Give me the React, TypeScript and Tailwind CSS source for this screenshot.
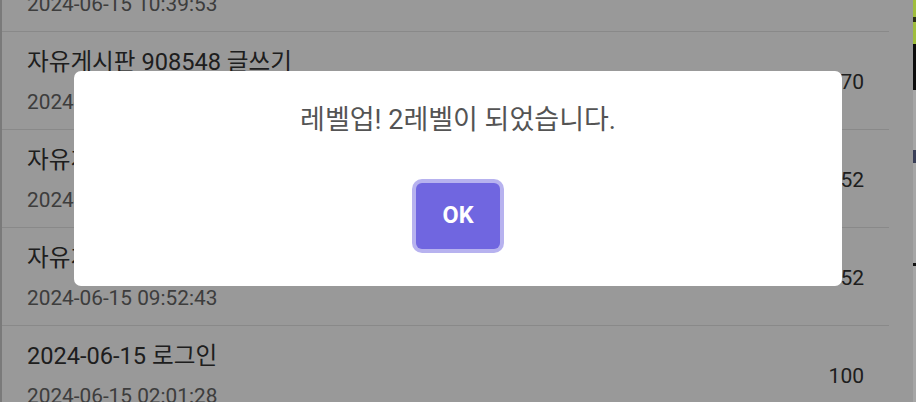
import React from "react";

type Activity = { title: string; date: string; point: string };

const activities: Activity[] = [
  { title: "자유게시판 908551 글쓰기", date: "2024-06-15 10:39:53", point: "70" },
  { title: "자유게시판 908548 글쓰기", date: "2024-06-15 10:21:07", point: "70" },
  { title: "자유게시판 908540 글쓰기", date: "2024-06-15 10:02:19", point: "52" },
  { title: "자유게시판 908533 글쓰기", date: "2024-06-15 09:52:43", point: "52" },
  { title: "2024-06-15 로그인", date: "2024-06-15 02:01:28", point: "100" },
];

const font = { fontFamily: 'Roboto, "Noto Sans CJK KR", sans-serif' };

function ActivityRow({ item }: { item: Activity }) {
  return (
    <li className="flex h-[98px] items-center justify-between border-b border-[#e5e5e5] pl-[25px] pr-[25px]">
      <div className="flex h-full flex-col pt-[13px]">
        <div className="text-[23.6px] leading-[35px] text-[#333] whitespace-nowrap">{item.title}</div>
        <div className="mt-[7px] text-[20.8px] leading-[31px] text-[#666] whitespace-nowrap">{item.date}</div>
      </div>
      <div className="pt-[2px] text-[21px] leading-[30px] text-[#333]">{item.point}</div>
    </li>
  );
}

export default function App() {
  return (
    <div className="relative h-[402px] w-[916px] overflow-hidden bg-white" style={font}>
      {/* page underneath the dialog */}
      <div className="flex h-full">
        <div className="h-full w-[889px] border-l-[2px] border-[#cccccc]">
          <ul className="mt-[-66px]">
            {activities.map((a, i) => (
              <ActivityRow key={i} item={a} />
            ))}
          </ul>
        </div>
      </div>

      {/* dim backdrop */}
      <div className="absolute inset-0 bg-black/40" />

      {/* edge of the neighbouring window */}
      <div className="absolute right-0 top-0 flex h-full w-[3px] flex-col">
        <div className="h-[17px] bg-[#9fbd3c]" />
        <div className="h-[5px] bg-[#2a2f18]" />
        <div className="h-[22px] bg-[#9fbd3c]" />
        <div className="h-[46px] bg-[#0d0d0d]" />
        <div className="h-[60px] bg-[#a6a6a6]" />
        <div className="h-[13px] bg-[#3a3f58]" />
        <div className="h-[100px] bg-[#a6a6a6]" />
        <div className="h-[3px] bg-[#111]" />
        <div className="flex-1 bg-[#a6a6a6]" />
      </div>

      {/* level-up dialog */}
      <div className="absolute left-[74px] top-[71px] flex h-[215px] w-[768px] flex-col items-center rounded-[7px] bg-white">
        <p className="mt-[30px] text-[27px] leading-[38px] text-[#545454]">레벨업! 2레벨이 되었습니다.</p>
        <button className="mt-[44px] flex h-[66px] w-[84px] items-center justify-center rounded-[6px] bg-[#7066e0] text-[23.4px] font-bold text-white shadow-[0_0_0_4px_rgba(112,102,224,0.5)]">
          OK
        </button>
      </div>
    </div>
  );
}
